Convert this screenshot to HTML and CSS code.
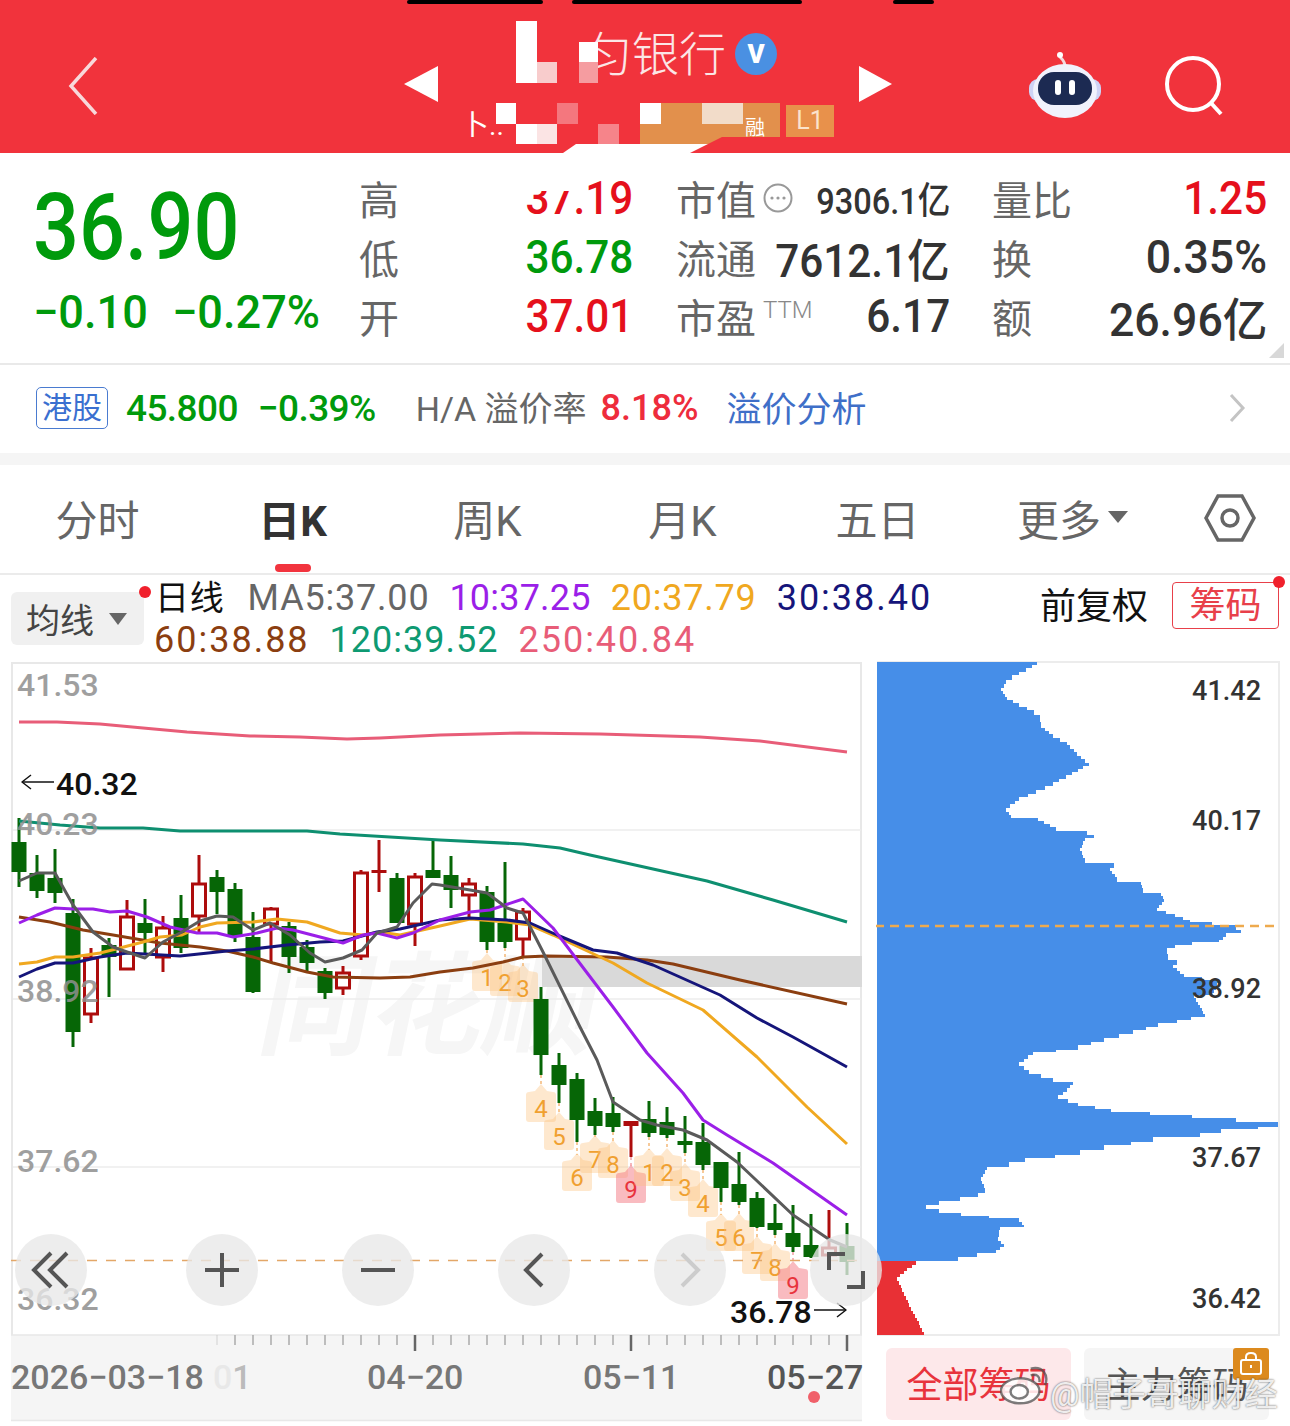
FILE: index.html
```html
<!DOCTYPE html>
<html lang="zh">
<head>
    <meta charset="UTF-8">
    <meta name="viewport" content="width=device-width, initial-scale=1.0">
    <title>银行 日K</title>
    <link rel="stylesheet" href="styles.css">
</head>
<body>
    <header class="top-bar">
        <svg class="back-icon" width="30" height="58" viewBox="0 0 30 58"><path d="M28 1 L3 29 L28 57"/></svg>
        <span class="tri tri-left"></span>
        <div class="title-col">
            <div class="title-row">
                <span class="title">匀银行</span>
                <span class="verified">V</span>
            </div>
            <div class="sub-row">
                <span class="sub-frag">卜..</span>
                <span class="sub-frag sub-rong">融</span>
                <span class="level">L1</span>
            </div>
        </div>
        <span class="tri tri-right"></span>
        <svg class="robot" width="72" height="68" viewBox="0 0 72 68">
            <path class="antenna" d="M36 16 C36 10 33 8 31 6"/>
            <circle cx="31" cy="4" r="3" fill="#fff"/>
            <rect x="0" y="28" width="72" height="22" rx="9" fill="#cfd3f5"/>
            <ellipse cx="36" cy="40" rx="32" ry="27" fill="#f1f2fc"/>
            <rect x="9" y="21" width="54" height="33" rx="16" fill="#1c2a52"/>
            <rect x="26" y="29" width="6" height="15" rx="3" fill="#fff"/>
            <rect x="40" y="29" width="6" height="15" rx="3" fill="#fff"/>
        </svg>
        <svg class="search" width="60" height="60" viewBox="0 0 60 60">
            <circle cx="28" cy="28" r="26"/>
            <path d="M46 47 L56 58"/>
        </svg>
        <svg class="mosaic" width="1290" height="153" viewBox="0 0 1290 153">
            <rect x="407" y="0" width="136" height="4" rx="2" fill="#000"/>
            <rect x="572" y="0" width="230" height="4" rx="2" fill="#000"/>
            <rect x="893" y="0" width="41" height="4" rx="2" fill="#000"/>
            <rect x="516" y="21" width="21" height="62" fill="#fff"/>
            <rect x="537" y="62" width="20" height="21" fill="#f8cccc"/>
            <rect x="579" y="42" width="19" height="20" fill="#fff"/>
            <rect x="579" y="62" width="19" height="21" fill="#f59ca0"/>
            <polygon points="640,103 780,103 780,137 722,137 708,144 640,144" fill="#e2904c"/>
            <rect x="496" y="103" width="20" height="21" fill="#fff"/>
            <rect x="516" y="124" width="21" height="20" fill="#fff"/>
            <rect x="537" y="124" width="20" height="20" fill="#fbe4e4"/>
            <rect x="557" y="103" width="21" height="21" fill="#f4777e"/>
            <rect x="598" y="124" width="21" height="20" fill="#f6848a"/>
            <rect x="640" y="103" width="21" height="21" fill="#fff"/>
            <rect x="702" y="103" width="41" height="21" fill="#f2dcc9"/>
            <polygon points="576,144 708,144 690,153 563,153" fill="#fff"/>
        </svg>
    </header>

    <section class="quote">
        <div class="price-col">
            <div class="price"><span class="num num-left">36.90</span></div>
            <div class="change">
                <span class="num num-left">−0.10</span>
                <span class="num num-left">−0.27%</span>
            </div>
        </div>
        <div class="stat-col stat-a">
            <div class="stat-row"><span class="stat-label">高</span><span class="num stat-val up cut">37.19</span></div>
            <div class="stat-row"><span class="stat-label">低</span><span class="num stat-val down">36.78</span></div>
            <div class="stat-row"><span class="stat-label">开</span><span class="num stat-val up">37.01</span></div>
        </div>
        <div class="stat-col stat-b">
            <div class="stat-row">
                <span class="stat-label">市值<svg class="more-dot" width="30" height="30" viewBox="0 0 30 30"><circle cx="15" cy="15" r="13.5"/><circle class="dot" cx="9" cy="15" r="1.6"/><circle class="dot" cx="15" cy="15" r="1.6"/><circle class="dot" cx="21" cy="15" r="1.6"/></svg></span>
                <span class="num stat-val small">9306.1亿</span>
            </div>
            <div class="stat-row"><span class="stat-label">流通</span><span class="num stat-val">7612.1亿</span></div>
            <div class="stat-row"><span class="stat-label">市盈<sup class="ttm">TTM</sup></span><span class="num stat-val">6.17</span></div>
        </div>
        <div class="stat-col stat-c">
            <div class="stat-row"><span class="stat-label">量比</span><span class="num stat-val up">1.25</span></div>
            <div class="stat-row"><span class="stat-label">换</span><span class="num stat-val wide">0.35%</span></div>
            <div class="stat-row"><span class="stat-label">额</span><span class="num stat-val wide">26.96亿</span></div>
        </div>
        <span class="corner"></span>
    </section>

    <section class="hk-row">
        <span class="hk-tag">港股</span>
        <span class="hk-price">45.800</span>
        <span class="hk-change">−0.39%</span>
        <span class="hk-label">H/A 溢价率</span>
        <span class="hk-rate">8.18%</span>
        <span class="hk-link">溢价分析</span>
        <svg class="hk-arrow" width="18" height="30" viewBox="0 0 18 30"><path d="M3 2 L15 15 L3 28"/></svg>
    </section>

    <div class="band"></div>

    <nav class="tabs">
        <a class="tab" href="#">分时</a>
        <a class="tab active" href="#">日K</a>
        <a class="tab" href="#">周K</a>
        <a class="tab" href="#">月K</a>
        <a class="tab" href="#">五日</a>
        <a class="tab" href="#">更多<span class="caret"></span></a>
        <a class="tab tab-icon" href="#">
            <svg width="52" height="50" viewBox="0 0 52 50"><path d="M2 25 L14 3 L38 3 L50 25 L38 47 L14 47 Z"/><circle cx="26" cy="25" r="8"/></svg>
        </a>
    </nav>

    <section class="legend">
        <button class="ma-select">均线<span class="caret caret-gray"></span></button>
        <span class="red-dot dot-ma"></span>
        <div class="ma-lines">
            <div class="ma-line">
                <span class="ma-name">日线</span>
                <span class="ma5">MA5:37.00</span>
                <span class="ma10">10:37.25</span>
                <span class="ma20">20:37.79</span>
                <span class="ma30">30:38.40</span>
            </div>
            <div class="ma-line">
                <span class="ma60">60:38.88</span>
                <span class="ma120">120:39.52</span>
                <span class="ma250">250:40.84</span>
            </div>
        </div>
        <span class="adjust">前复权</span>
        <button class="chips-btn">筹码<span class="red-dot dot-chips"></span></button>
    </section>

    <main class="chart-row">
        <svg id="kline" class="kline" width="870" height="766" viewBox="0 660 870 766"></svg>
        <div class="chip-panel">
            <svg id="chips" class="chips" width="404" height="678" viewBox="876 660 404 678"></svg>
            <div class="chip-tabs">
                <button class="chip-tab chip-all">全部筹码</button>
                <button class="chip-tab chip-main">主力筹码
                    <span class="lock">
                        <svg width="24" height="24" viewBox="0 0 24 24"><rect x="2" y="8" width="20" height="14" rx="2"/><path d="M7 8 V5 C7 2 9 1 12 1 C15 1 17 2 17 5 V8"/><path d="M12 13 V16"/></svg>
                    </span>
                </button>
            </div>
        </div>
        <div class="chart-controls">
            <button class="round first"><svg width="40" height="40" viewBox="0 0 40 40"><path d="M20 3 L3 20 L20 37 M36 3 L19 20 L36 37"/></svg></button>
            <button class="round"><svg width="36" height="36" viewBox="0 0 36 36"><path d="M1 18 H35 M18 1 V35"/></svg></button>
            <button class="round"><svg width="36" height="36" viewBox="0 0 36 36"><path d="M1 18 H35"/></svg></button>
            <button class="round"><svg width="22" height="36" viewBox="0 0 22 36"><path d="M19 2 L3 18 L19 34"/></svg></button>
            <button class="round off"><svg width="22" height="36" viewBox="0 0 22 36"><path d="M3 2 L19 18 L3 34"/></svg></button>
            <button class="round"><svg width="38" height="38" viewBox="0 0 38 38"><path d="M2 19 V3 H18 M36 20 V36 H20"/></svg></button>
        </div>
        <div class="weibo">
            <svg width="50" height="40" viewBox="0 0 52 40">
                <ellipse cx="21" cy="25" rx="20" ry="13"/>
                <ellipse cx="20" cy="26" rx="9" ry="7"/>
                <path d="M32 9 C38 7 42 10 41 16 M32 2 C44 -1 51 8 47 19"/>
            </svg>
            <span>@帽子哥聊财经</span>
        </div>
    </main>
    <script src="chart.js"></script>
</body>
</html>
```

FILE: styles.css
```css
body {
    margin: 0;
    width: 1290px;
    height: 1426px;
    overflow: hidden;
    background-color: #fff;
    font-family: Roboto, "Noto Sans CJK SC", sans-serif;
    color: #333;
}

button {
    font-family: inherit;
    border: none;
    padding: 0;
}

/* header */
.top-bar {
    position: relative;
    display: flex;
    align-items: flex-start;
    height: 153px;
    padding-left: 68px;
    box-sizing: border-box;
    background-color: #f1333c;
}

.back-icon {
    margin-top: 57px;
    margin-right: 306px;
}

.back-icon path {
    fill: none;
    stroke: #f8d8da;
    stroke-width: 3.5;
}

.tri {
    width: 0;
    height: 0;
    margin-top: 66px;
    border-top: 18.5px solid transparent;
    border-bottom: 18.5px solid transparent;
}

.tri-left {
    border-right: 34px solid #fff;
}

.tri-right {
    border-left: 33px solid #fff;
}

.title-col {
    width: 421px;
    padding-left: 147px;
    box-sizing: border-box;
}

.title-row {
    display: flex;
    align-items: center;
    height: 50px;
    margin-top: 29px;
}

.title {
    font-size: 47px;
    font-weight: 300;
    line-height: 50px;
    color: #fbe6e6;
    margin-top: 1px;
    margin-right: 9px;
}

.verified {
    display: flex;
    align-items: center;
    justify-content: center;
    width: 42px;
    height: 42px;
    border-radius: 50%;
    background-color: #4a90e2;
    color: #fff;
    font-size: 26px;
    font-weight: 900;
}

.sub-row {
    display: flex;
    align-items: center;
    justify-content: flex-end;
    margin-top: 26px;
    margin-right: 25px;
    height: 32px;
}

.sub-frag {
    position: absolute;
    left: 461px;
    top: 103px;
    font-size: 28px;
    color: #fff;
}

.sub-rong {
    left: 745px;
    top: 112px;
    font-size: 20px;
    z-index: 2;
}

.level {
    width: 48px;
    height: 32px;
    line-height: 32px;
    text-align: center;
    background-color: #e8914b;
    color: #fbe3cc;
    font-size: 25px;
}

.robot {
    margin-top: 51px;
    margin-left: 137px;
}

.antenna {
    fill: none;
    stroke: #f3d9de;
    stroke-width: 3;
}

.search {
    margin-top: 56px;
    margin-left: 64px;
}

.search circle,
.search path {
    fill: none;
    stroke: #fff;
    stroke-width: 4;
}

.mosaic {
    position: absolute;
    left: 0;
    top: 0;
}

/* quote */
.quote {
    position: relative;
    display: flex;
    height: 212px;
    padding-top: 15px;
    box-sizing: border-box;
    border-bottom: 2px solid #e9e9e9;
}

.num {
    display: inline-block;
    transform: scaleX(0.88);
    transform-origin: right center;
    font-weight: 500;
}

.num-left {
    transform-origin: left center;
}

.price-col {
    width: 360px;
    padding-left: 33px;
    box-sizing: border-box;
    color: #009a0c;
}

.price {
    height: 84px;
    margin-top: 18px;
    line-height: 84px;
    font-size: 92px;
    white-space: nowrap;
}

.change {
    display: flex;
    height: 50px;
    margin-top: 17px;
    line-height: 50px;
    font-size: 46px;
    white-space: nowrap;
}

.change .num {
    width: 139px;
    transform: scaleX(0.98);
}

.stat-col {
    width: 273px;
}

.stat-b {
    margin-left: 44px;
}

.stat-c {
    width: 274px;
    margin-left: 43px;
}

.stat-row {
    display: flex;
    align-items: center;
    justify-content: space-between;
    height: 59px;
    white-space: nowrap;
}

.stat-label {
    display: flex;
    align-items: center;
    margin-left: -1px;
    font-size: 40px;
    color: #666;
}

.stat-val {
    font-size: 46px;
    color: #333;
    transform: scaleX(0.92);
}

.stat-val.small {
    font-size: 37px;
    transform: scaleX(0.88);
}

.stat-val.wide {
    transform: scaleX(0.97);
}

.stat-val.up {
    color: #e5101c;
}

.stat-val.down {
    color: #009a0c;
}

.cut {
    position: relative;
}

.cut::before {
    content: "";
    position: absolute;
    left: -4px;
    top: 6px;
    width: 58px;
    height: 14px;
    background-color: #fff;
}

.more-dot {
    margin-left: 7px;
}

.more-dot circle {
    fill: none;
    stroke: #999;
    stroke-width: 2;
}

.more-dot .dot {
    fill: #999;
    stroke: none;
}

.ttm {
    align-self: flex-start;
    margin-left: 7px;
    margin-top: 10px;
    font-size: 24px;
    font-weight: 300;
    line-height: 26px;
    color: #888;
}

.corner {
    position: absolute;
    right: 6px;
    bottom: 5px;
    width: 0;
    height: 0;
    border-left: 15px solid transparent;
    border-bottom: 15px solid #d8d8d8;
}

/* H shares row */
.hk-row {
    display: flex;
    align-items: center;
    height: 88px;
    padding-left: 36px;
    white-space: nowrap;
}

.hk-tag {
    width: 72px;
    height: 42px;
    line-height: 40px;
    box-sizing: border-box;
    border: 1.5px solid #4a7bd0;
    border-radius: 5px;
    text-align: center;
    font-size: 30px;
    color: #3a6fd0;
    margin-right: 18px;
    margin-bottom: 2px;
}

.hk-price,
.hk-change {
    font-size: 37px;
    font-weight: 500;
    letter-spacing: -0.6px;
    color: #009a0c;
    margin-bottom: 2px;
}

.hk-price {
    margin-right: 20px;
}

.hk-change {
    margin-right: 40px;
}

.hk-label {
    font-size: 34px;
    color: #666;
    margin-right: 14px;
    margin-bottom: 5px;
}

.hk-rate {
    font-size: 36px;
    font-weight: 500;
    color: #ee2c3c;
    margin-right: 28px;
    margin-bottom: 2px;
}

.hk-link {
    font-size: 35px;
    color: #3f6fc8;
    margin-bottom: 5px;
}

.hk-arrow {
    margin-left: auto;
    margin-right: 44px;
    margin-bottom: 3px;
}

.hk-arrow path {
    fill: none;
    stroke: #c4c4c4;
    stroke-width: 3;
}

.band {
    height: 12px;
    background-color: #f5f5f5;
}

/* tabs */
.tabs {
    display: grid;
    grid-template-columns: repeat(6, 195px) 120px;
    height: 108px;
    border-bottom: 2px solid #ebebeb;
}

.tab {
    position: relative;
    display: flex;
    align-items: center;
    justify-content: center;
    font-size: 42px;
    color: #666;
    text-decoration: none;
    padding-bottom: 4px;
}

.tab.active {
    font-weight: 700;
    color: #333;
}

.tab.active::after {
    content: "";
    position: absolute;
    left: 80px;
    bottom: 1px;
    width: 36px;
    height: 8px;
    border-radius: 4px;
    background-color: #f2343e;
}

.tab-icon {
    justify-content: flex-start;
    padding-left: 34px;
    padding-bottom: 2px;
}

.tab-icon path,
.tab-icon circle {
    fill: none;
    stroke: #666;
    stroke-width: 3.5;
}

.caret {
    display: inline-block;
    width: 0;
    height: 0;
    margin-left: 7px;
    border-left: 10px solid transparent;
    border-right: 10px solid transparent;
    border-top: 12px solid #666;
}

.caret-gray {
    margin-left: 15px;
    border-left-width: 9px;
    border-right-width: 9px;
    border-top-color: #666;
}

/* moving average legend */
.legend {
    position: relative;
    display: flex;
    align-items: flex-start;
    height: 85px;
    padding-left: 11px;
    white-space: nowrap;
}

.ma-select {
    display: flex;
    align-items: center;
    justify-content: flex-start;
    width: 133px;
    height: 53px;
    margin-top: 17px;
    padding-left: 15px;
    border-radius: 6px;
    background-color: #f0f0f0;
    font-size: 34px;
    color: #444;
}

.red-dot {
    position: absolute;
    width: 12px;
    height: 12px;
    border-radius: 50%;
    background-color: #f0202c;
}

.dot-ma {
    left: 139px;
    top: 11px;
}

.dot-chips {
    right: -7px;
    top: -7px;
}

.ma-lines {
    margin-left: 11px;
    font-size: 36px;
    letter-spacing: 0.8px;
}

.ma-line {
    display: flex;
    align-items: center;
    height: 42px;
    margin-top: 2px;
}

.ma-line + .ma-line {
    margin-top: 0;
}

.ma-line span {
    margin-right: 20px;
}

.ma-line .ma-name {
    font-size: 34px;
    color: #111;
    margin-right: 23px;
    margin-bottom: 6px;
}

.ma5 { color: #666; }
.ma10 { color: #9b1fe8; letter-spacing: 0.2px; }
.ma20 { color: #f0a820; }
.ma30 { color: #15157a; letter-spacing: 2px; }
.ma60 { color: #8b3e10; margin-left: -1px; letter-spacing: 2px; }
.ma120 { color: #0e9a72; letter-spacing: 1px; }
.ma250 { color: #e85d78; letter-spacing: 2px; }

.adjust {
    position: absolute;
    left: 1040px;
    top: 2px;
    font-size: 36px;
    color: #111;
}

.chips-btn {
    position: absolute;
    left: 1172px;
    top: 7px;
    width: 107px;
    height: 47px;
    box-sizing: border-box;
    border: 1.5px solid #e8404a;
    border-radius: 4px;
    background-color: #fff;
    font-size: 36px;
    line-height: 42px;
    color: #e8404a;
}

/* chart */
.chart-row {
    position: relative;
    display: flex;
    height: 766px;
}

.kline {
    display: block;
}

.kline text,
.chips text {
    font-family: Roboto, "Noto Sans CJK SC", sans-serif;
}

.chip-panel {
    width: 404px;
    margin-left: 6px;
}

.chips {
    display: block;
}

.chip-tabs {
    display: flex;
    gap: 13px;
    padding: 10px 0 0 10px;
}

.chip-tab {
    position: relative;
    width: 185px;
    height: 72px;
    padding-bottom: 4px;
    border-radius: 6px;
    font-size: 36px;
}

.chip-all {
    background-color: #fde8ea;
    color: #e8333c;
}

.chip-main {
    background-color: #f5f5f5;
    color: #555;
}

.lock {
    position: absolute;
    right: 0;
    top: 0;
    display: flex;
    align-items: center;
    justify-content: center;
    width: 36px;
    height: 32px;
    border-radius: 3px;
    background-color: #dc8a1e;
}

.lock rect,
.lock path {
    fill: none;
    stroke: #fff;
    stroke-width: 2;
}

.chart-controls {
    position: absolute;
    left: 15px;
    top: 574px;
    display: flex;
    gap: 84px;
}

.round {
    display: flex;
    align-items: center;
    justify-content: center;
    width: 72px;
    height: 72px;
    border-radius: 50%;
    background-color: rgba(232, 232, 232, 0.78);
}

.round.first {
    margin-right: 15px;
}

.round path {
    fill: none;
    stroke: #555;
    stroke-width: 4;
}

.round.off path {
    stroke: #ccc;
}

.weibo {
    position: absolute;
    left: 1000px;
    top: 708px;
    display: flex;
    align-items: center;
    font-size: 33px;
    color: rgba(255, 255, 255, 0.88);
    text-shadow: 0 0 2px rgba(0, 0, 0, 0.7);
    white-space: nowrap;
}

.weibo svg {
    margin-top: -12px;
    margin-right: 0;
}

.weibo ellipse,
.weibo path {
    fill: rgba(255, 255, 255, 0.85);
    stroke: rgba(80, 80, 80, 0.75);
    stroke-width: 2.5;
}

.weibo path {
    fill: none;
}
```

FILE: chart.js
```js
const NS = 'http://www.w3.org/2000/svg';

function add(svg, tag, attrs, text) {
    const el = document.createElementNS(NS, tag);
    for (const k in attrs) el.setAttribute(k, attrs[k]);
    if (text !== undefined) el.textContent = text;
    svg.appendChild(el);
    return el;
}

function poly(svg, pts, color, width) {
    add(svg, 'polyline', {
        points: pts.join(' '),
        fill: 'none',
        stroke: color,
        'stroke-width': width || 3,
        'stroke-linejoin': 'round'
    });
}

// [high, low, top of body, bottom of body, color]
const candles = [
    [818,887,842,872,'g'],[855,898,873,891,'g'],[849,903,878,893,'g'],[899,1047,913,1032,'g'],
    [948,1023,957,1015,'r'],[938,997,945,957,'g'],[900,970,916,970,'r'],[899,953,923,933,'g'],
    [916,972,927,958,'r'],[895,953,918,948,'g'],[855,933,883,917,'r'],[870,914,877,892,'g'],
    [883,942,889,937,'g'],[912,993,937,992,'g'],[907,963,908,925,'r'],[922,973,926,957,'g'],
    [940,972,947,963,'g'],[968,999,971,993,'g'],[966,995,972,989,'r'],[870,960,872,957,'r'],
    [840,892,870,873,'t'],[873,923,878,923,'g'],[873,946,876,925,'r'],[840,878,870,878,'g'],
    [856,908,875,890,'g'],[878,920,883,896,'r'],[886,950,892,942,'g'],[862,948,923,942,'g'],
    [908,957,911,940,'r'],[987,1075,999,1055,'g'],[1053,1103,1065,1085,'g'],[1073,1142,1079,1120,'g'],
    [1098,1135,1111,1126,'g'],[1097,1132,1113,1127,'g'],[1121,1157,1121,1126,'t'],[1101,1137,1119,1133,'g'],
    [1107,1138,1122,1135,'g'],[1116,1153,1141,1145,'g'],[1123,1170,1142,1165,'g'],[1162,1202,1162,1188,'g'],
    [1152,1205,1184,1202,'g'],[1192,1228,1198,1227,'g'],[1204,1235,1223,1230,'g'],[1205,1252,1233,1247,'g'],
    [1214,1258,1245,1257,'g'],[1210,1257,1247,1256,'r'],[1223,1275,1246,1262,'g']
];

// candle index, label, label center y
const badges = [
    [26,'1',977],[27,'2',982],[28,'3',988],[29,'4',1108],[30,'5',1136],[31,'6',1177],
    [32,'7',1159],[33,'8',1164],[34,'9',1189],[35,'1',1172],[36,'2',1172],[37,'3',1187],
    [38,'4',1203],[39,'5',1237],[40,'6',1237],[41,'7',1260],[42,'8',1267],[43,'9',1285]
];

const lines = [
    ['#e85d78', [[19,722],[57,722],[100,724],[143,728],[187,732],[250,736],[300,737],[347,739],[380,738],[440,735],[520,733],[600,734],[700,737],[760,741],[847,752]]],
    ['#0e8f70', [[19,821],[60,825],[100,828],[143,828],[180,831],[250,831],[307,831],[340,834],[440,840],[523,844],[560,848],[590,855],[707,881],[773,900],[847,922]]],
    ['#8b3e10', [[19,917],[50,922],[83,930],[113,935],[160,943],[200,947],[227,951],[253,957],[273,963],[307,972],[333,977],[380,978],[410,977],[440,972],[473,968],[503,962],[523,957],[547,956],[607,957],[647,960],[673,964],[740,980],[847,1004]]],
    ['#f0a820', [[19,964],[37,962],[55,957],[73,957],[100,953],[120,948],[143,942],[160,937],[182,935],[200,927],[217,923],[253,922],[277,919],[307,922],[340,933],[363,935],[380,932],[400,935],[440,926],[470,919],[507,922],[530,925],[553,935],[613,963],[647,983],[703,1010],[757,1057],[807,1107],[847,1144]]],
    ['#15157a', [[19,977],[37,969],[55,963],[73,963],[100,957],[127,953],[180,956],[227,951],[253,949],[287,945],[320,942],[343,941],[377,932],[400,929],[440,920],[470,918],[507,920],[530,923],[557,935],[593,950],[617,953],[653,965],[720,995],[757,1018],[793,1037],[847,1067]]],
    ['#9b1fe8', [[19,923],[37,915],[55,908],[73,909],[93,909],[110,912],[127,911],[147,917],[170,927],[197,933],[217,933],[233,937],[257,933],[277,928],[293,930],[320,937],[343,943],[363,935],[377,933],[397,938],[413,933],[440,920],[470,912],[490,910],[523,899],[553,928],[613,1007],[647,1053],[683,1093],[703,1120],[727,1135],[773,1163],[847,1215]]],
    ['#5a5a5a', [[19,881],[37,873],[55,873],[73,905],[93,932],[113,947],[127,952],[145,958],[163,942],[180,933],[200,921],[217,916],[233,917],[253,930],[270,923],[290,935],[310,953],[325,962],[343,958],[362,950],[377,933],[397,927],[413,903],[432,884],[440,885],[470,890],[487,893],[507,908],[523,913],[543,952],[580,1027],[597,1060],[613,1102],[640,1120],[657,1125],[683,1130],[707,1140],[737,1162],[793,1215],[830,1240],[847,1247]]]
];

// right edge of the chip profile, x at y
const profile = [
    [1037,662],[1026,668],[1012,675],[1006,680],[1001,688],[1007,697],[1019,703],[1034,710],[1040,715],[1041,725],
    [1053,734],[1067,742],[1077,752],[1089,763],[1072,772],[1053,782],[1036,790],[1019,797],[1006,808],[1011,815],
    [1038,818],[1056,827],[1087,831],[1094,835],[1085,838],[1080,848],[1085,858],[1114,863],[1110,868],[1117,877],
    [1141,882],[1143,888],[1161,893],[1164,899],[1157,908],[1175,914],[1190,920],[1212,922],[1236,925],[1241,930],
    [1226,933],[1219,940],[1192,942],[1175,945],[1167,948],[1168,957],[1177,960],[1173,965],[1184,974],[1219,980],
    [1212,993],[1194,995],[1200,1005],[1205,1014],[1177,1020],[1158,1023],[1133,1030],[1104,1038],[1078,1045],[1056,1050],
    [1033,1052],[1019,1062],[1029,1070],[1053,1078],[1073,1082],[1067,1088],[1058,1095],[1078,1103],[1111,1109],[1150,1112],
    [1192,1115],[1236,1118],[1278,1122],[1258,1127],[1221,1129],[1200,1133],[1153,1137],[1131,1142],[1104,1145],[1080,1150],
    [1055,1155],[1025,1158],[1009,1162],[987,1167],[981,1177],[985,1188],[978,1193],[960,1197],[939,1201],[926,1205],
    [939,1209],[961,1213],[989,1216],[1019,1218],[1024,1225],[1000,1227],[998,1237],[1004,1244],[996,1250],[977,1253],
    [958,1257],[938,1261]
];
const profileRed = [[916,1261],[907,1268],[897,1277],[911,1307],[926,1335]];

function drawKline() {
    const svg = document.getElementById('kline');

    // frame and axis strip
    add(svg, 'rect', { x: 11, y: 1335, width: 851, height: 85, fill: '#f5f5f5' });
    add(svg, 'path', { d: 'M12 1335 V663 H861 V1335', fill: 'none', stroke: '#e8e8e8', 'stroke-width': 2 });
    add(svg, 'path', { d: 'M11 1335 H862 M11 1420.5 H862', stroke: '#e8e8e8', 'stroke-width': 1.5 });

    add(svg, 'text', {
        x: 255, y: 1046, 'font-size': 112, 'font-weight': 700, fill: '#f6f6f6',
        transform: 'skewX(-12) translate(222 0)'
    }, '同花顺');

    [830, 999, 1167].forEach((y) => {
        add(svg, 'line', { x1: 13, x2: 861, y1: y, y2: y, stroke: '#ececec', 'stroke-width': 1.5 });
    });
    add(svg, 'rect', { x: 542, y: 956, width: 320, height: 31, fill: '#d9d9d9' });

    badges.forEach(([i, label, y]) => {
        const cx = 19 + i * 18;
        const red = label === '9';
        const low = candles[i][1];
        add(svg, 'line', {
            x1: cx, x2: cx, y1: low, y2: y - 22,
            stroke: red ? '#f3a0a6' : '#f4b878', 'stroke-width': 1.5, 'stroke-dasharray': '3 3'
        });
        add(svg, 'path', {
            d: `M${cx - 15} ${y - 13} Q${cx - 15} ${y - 16} ${cx - 12} ${y - 16} L${cx - 6} ${y - 17} L${cx} ${y - 24} L${cx + 6} ${y - 17} L${cx + 12} ${y - 16} Q${cx + 15} ${y - 16} ${cx + 15} ${y - 13} V${y + 11} Q${cx + 15} ${y + 14} ${cx + 12} ${y + 14} H${cx - 12} Q${cx - 15} ${y + 14} ${cx - 15} ${y + 11} Z`,
            fill: red ? 'rgba(244,120,130,0.5)' : 'rgba(252,190,120,0.36)'
        });
        add(svg, 'text', {
            x: cx, y: y + 9, 'text-anchor': 'middle', 'font-size': 24,
            fill: red ? '#e8333c' : '#f0a030'
        }, label);
    });

    candles.forEach(([high, low, top, bottom, kind], i) => {
        const cx = 19 + i * 18;
        const color = kind === 'g' ? '#066606' : '#ad0c0c';
        add(svg, 'line', { x1: cx, x2: cx, y1: high, y2: low, stroke: color, 'stroke-width': 3 });
        if (kind === 'r') {
            add(svg, 'rect', {
                x: cx - 6.5, y: top + 1, width: 13, height: bottom - top - 2,
                fill: '#fff', stroke: color, 'stroke-width': 3
            });
        } else {
            add(svg, 'rect', { x: cx - 7.5, y: top, width: 15, height: bottom - top, fill: color });
        }
    });

    lines.forEach(([color, pts]) => poly(svg, pts, color));

    add(svg, 'line', {
        x1: 11, x2: 862, y1: 1260.5, y2: 1260.5,
        stroke: '#e3a768', 'stroke-width': 1.5, 'stroke-dasharray': '10 9'
    });

    [['41.53', 696], ['40.23', 835], ['38.92', 1002], ['37.62', 1172], ['36.32', 1310]].forEach(([t, y]) => {
        add(svg, 'text', { x: 17, y: y, 'font-size': 32, 'font-weight': 500, fill: '#8f8f8f', opacity: 0.85 }, t);
    });

    add(svg, 'text', { x: 56, y: 795, 'font-size': 32, 'font-weight': 500, fill: '#111' }, '40.32');
    poly(svg, [[54, 782], [22, 782]], '#111', 1.5);
    poly(svg, [[31, 775], [22, 782], [31, 789]], '#111', 1.5);
    add(svg, 'text', { x: 730, y: 1323, 'font-size': 32, 'font-weight': 500, fill: '#111' }, '36.78');
    poly(svg, [[814, 1310], [846, 1310]], '#111', 1.5);
    poly(svg, [[837, 1303], [846, 1310], [837, 1317]], '#111', 1.5);

    // axis ticks, fading out to the left
    for (let x = 217; x <= 847; x += 18) {
        const major = x === 415 || x === 631 || x === 847;
        add(svg, 'line', {
            x1: x, x2: x, y1: 1335, y2: major ? 1351 : 1345,
            stroke: major ? '#666' : '#aaa', 'stroke-width': major ? 2.5 : 1.5,
            opacity: x < 235 ? 0.3 : 1
        });
    }

    const axis = { 'font-size': 34, y: 1389, 'font-weight': 500 };
    add(svg, 'text', { ...axis, x: 11, fill: '#777' }, '2026−03−18');
    const faded = add(svg, 'text', { ...axis, x: 213, fill: '#bbb' });
    add(faded, 'tspan', { fill: '#e8e8e8' }, '0');
    add(faded, 'tspan', {}, '1');
    add(svg, 'text', { ...axis, x: 367, fill: '#777' }, '04−20');
    add(svg, 'text', { ...axis, x: 583, fill: '#777' }, '05−11');
    add(svg, 'text', { ...axis, x: 767, fill: '#555' }, '05−27');
    add(svg, 'circle', { cx: 814, cy: 1397, r: 6, fill: '#f0606a' });
}

// turn the edge points into one row per few pixels, so the profile reads as a stepped histogram
function stepped(points, rowHeight) {
    let d = '';
    for (let i = 0; i < points.length - 1; i++) {
        const [x0, y0] = points[i];
        const [x1, y1] = points[i + 1];
        const rows = Math.max(1, Math.round((y1 - y0) / rowHeight));
        for (let r = 0; r < rows; r++) {
            const x = Math.round(x0 + (x1 - x0) * r / rows);
            const y = y0 + (y1 - y0) * (r + 1) / rows;
            d += `H${x} V${y.toFixed(1)} `;
        }
    }
    return d;
}

function drawChips() {
    const svg = document.getElementById('chips');
    add(svg, 'path', { d: 'M877 662 H1279 V1335 H877', fill: 'none', stroke: '#ececec', 'stroke-width': 2 });
    add(svg, 'path', {
        d: `M877 662 ${stepped(profile, 3.6)} H877 Z`,
        fill: '#468ee8', 'shape-rendering': 'crispEdges'
    });
    add(svg, 'path', {
        d: `M877 1261 ${stepped(profileRed, 3.6)} H877 Z`,
        fill: '#e83035', 'shape-rendering': 'crispEdges'
    });
    add(svg, 'line', {
        x1: 875, x2: 1278, y1: 926, y2: 926,
        stroke: '#eeaa4e', 'stroke-width': 2.5, 'stroke-dasharray': '9 6'
    });
    [['41.42', 700], ['40.17', 830], ['38.92', 998], ['37.67', 1167], ['36.42', 1308]].forEach(([t, y]) => {
        add(svg, 'text', {
            x: 1261, y: y, 'text-anchor': 'end', 'font-size': 27, 'font-weight': 500, fill: '#333'
        }, t);
    });
}

drawKline();
drawChips();
```
